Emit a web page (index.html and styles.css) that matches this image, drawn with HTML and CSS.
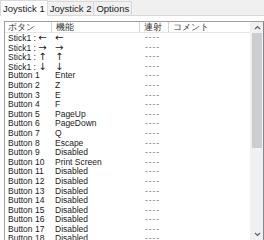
FILE: index.html
```html
<!DOCTYPE html>
<html lang="ja">
<head>
  <meta charset="UTF-8" />
  <title>Joystick</title>
  <link rel="stylesheet" href="styles.css">
</head>
<body>
  <div class="tabs">
    <div class="tab active">Joystick 1</div>
    <div class="tab">Joystick 2</div>
    <div class="tab">Options</div>
  </div>
  <div class="page">
    <div class="list">
      <div class="table">
        <div class="head">
          <div class="c1">ボタン</div>
          <div class="c2">機能</div>
          <div class="c3">連射</div>
          <div class="c4">コメント</div>
        </div>
        <div id="rows"></div>
      </div>
      <div class="scroll">
        <div class="arrow">
          <svg width="7" height="5" viewBox="0 0 7 5"><path d="M1 4 L3.5 1.5 L6 4" fill="none" stroke="#606060" stroke-width="1.2"/></svg>
        </div>
        <div class="track"><div class="thumb"></div></div>
        <div class="arrow">
          <svg width="7" height="5" viewBox="0 0 7 5"><path d="M1 1 L3.5 3.5 L6 1" fill="none" stroke="#606060" stroke-width="1.2"/></svg>
        </div>
      </div>
    </div>
  </div>

  <script>
    const arrows = ["\u2190", "\u2192", "\u2191", "\u2193"];
    const rows = arrows.map(a => {
      const s = `<span class="ar">${a}\uFE0E</span>`;
      return ["Stick1 : " + s, s];
    });
    rows.push(
      ["Button 1", "Enter"],
      ["Button 2", "Z"],
      ["Button 3", "E"],
      ["Button 4", "F"],
      ["Button 5", "PageUp"],
      ["Button 6", "PageDown"],
      ["Button 7", "Q"],
      ["Button 8", "Escape"],
      ["Button 9", "Disabled"],
      ["Button 10", "Print Screen"]
    );
    for (let i = 11; i <= 18; i++) rows.push(["Button " + i, "Disabled"]);

    const box = document.getElementById("rows");
    rows.forEach(r => {
      const row = document.createElement("div");
      row.className = "row";
      row.innerHTML = `
        <div class="c1">${r[0]}</div>
        <div class="c2">${r[1]}</div>
        <div class="c3 dash">----</div>
        <div class="c4"></div>
      `;
      box.appendChild(row);
    });
  </script>
</body>
</html>
```

FILE: styles.css
```css
body {
  margin: 0;
  width: 264px;
  height: 240px;
  overflow: hidden;
  background-color: #f0f0f0;
  font-family: "Liberation Sans", Arial, sans-serif;
  color: #1a1a1a;
}
.tabs {
  display: flex;
  height: 14px;
  padding-top: 1px;
  border-bottom: 1px solid #d9d9d9;
}
.tab {
  font-size: 9.5px;
  line-height: 13px;
  padding: 0 2px;
  border: 1px solid #d9d9d9;
  border-bottom: none;
  border-left: none;
  background-color: #f0f0f0;
}
.tab.active {
  background-color: #fff;
  border-left: 1px solid #d9d9d9;
  margin-top: -1px;
  line-height: 15px;
  margin-bottom: -1px;
}
.page {
  background-color: #fff;
  padding: 5px 0 0 4px;
  height: 226px;
}
.list {
  display: flex;
  height: 218px;
  border: 1px solid #a0a0a0;
  border-right: 1px solid #828790;
  background-color: #fff;
}
.table {
  flex: 1;
  font-size: 8.5px;
  overflow: hidden;
}
.head {
  display: flex;
  height: 10px;
  line-height: 10px;
  border-bottom: 1px solid #e5e5e5;
}
.head div {
  border-right: 1px solid #d5d5d5;
  color: #333;
}
.head .c4 {
  border-right: none;
}
.row {
  display: flex;
  height: 9.6px;
  line-height: 9.6px;
  white-space: nowrap;
  overflow: hidden;
}
.ar {
  font-family: "DejaVu Sans", sans-serif;
  font-size: 10px;
  line-height: 1;
  color: #1a1a1a;
}
.c1 {
  width: 43px;
  padding-left: 3px;
}
.c2 {
  width: 83px;
  padding-left: 4px;
}
.c3 {
  width: 24px;
  padding-left: 4px;
}
.c4 {
  flex: 1;
  padding-left: 4px;
}
.row .c3 {
  padding-left: 7px;
  width: 21px;
}
.dash {
  color: #777;
  letter-spacing: 0.9px;
}
.scroll {
  width: 12px;
  display: flex;
  flex-direction: column;
  background-color: #f0f0f0;
  border-left: 1px solid #f0f0f0;
}
.arrow {
  height: 11px;
  display: flex;
  align-items: center;
  justify-content: center;
}
.track {
  flex: 1;
}
.thumb {
  margin: 0 1px;
  height: 115px;
  background-color: #cdcdcd;
}
```
